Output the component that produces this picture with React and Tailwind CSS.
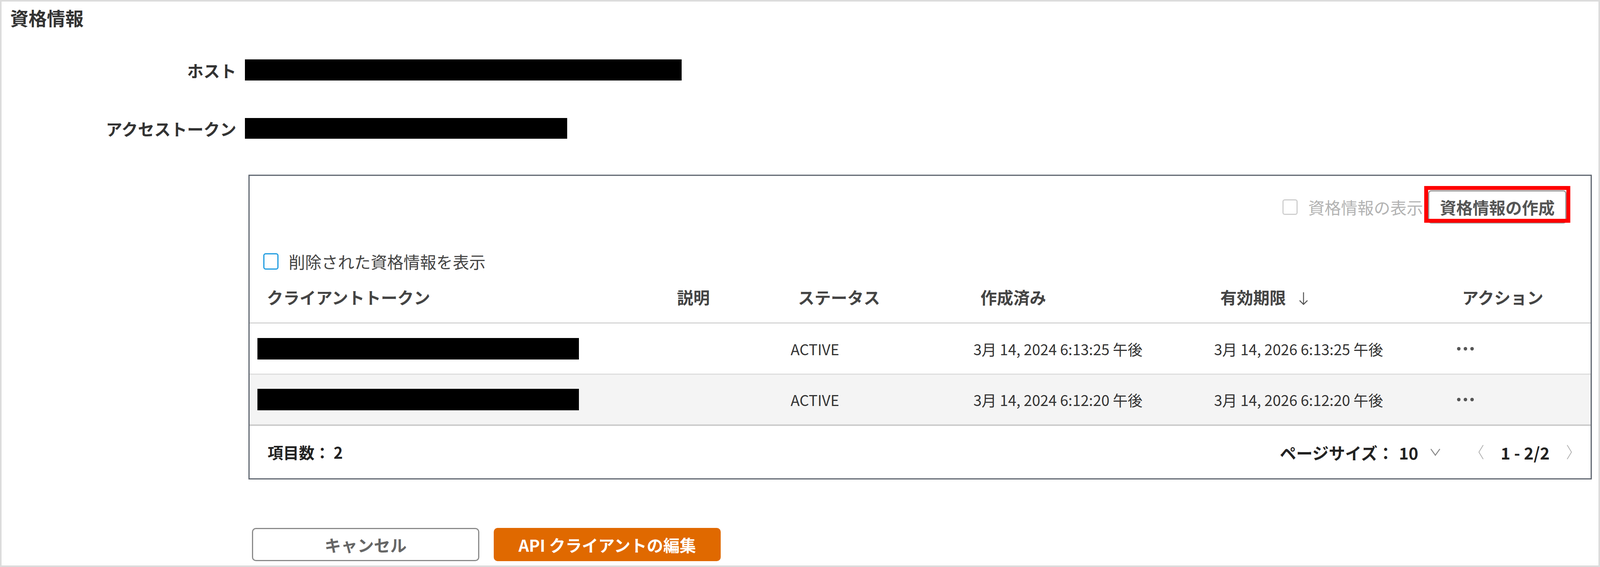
import React from 'react';

const rows = [
    { status: 'ACTIVE', created: '3月 14, 2024 6:13:25 午後', expires: '3月 14, 2026 6:13:25 午後' },
    { status: 'ACTIVE', created: '3月 14, 2024 6:12:20 午後', expires: '3月 14, 2026 6:12:20 午後' },
];

const cols = "grid grid-cols-[1050px_315px_468px_616px_622px_1fr] items-center";

const Dots = () => (
    <div className="flex items-center gap-[8px]">
        <span className="w-[9px] h-[9px] rounded-full bg-[#555]" />
        <span className="w-[9px] h-[9px] rounded-full bg-[#555]" />
        <span className="w-[9px] h-[9px] rounded-full bg-[#555]" />
    </div>
);

const App = () => {
    return (
        <div className="w-full h-[1451px] border-[4px] border-[#dcdcdc] bg-white font-['Noto_Sans_CJK_JP','Noto_Sans',sans-serif] text-[#333]">
            <h1 className="pl-[22px] pt-[11px] text-[47px] leading-[60px] font-bold text-[#333]">資格情報</h1>

            {/* credentials */}
            <div className="mt-[74px] flex items-center h-[60px] gap-[22px]">
                <div className="w-[601px] text-right text-[42px] font-bold">ホスト</div>
                <div className="w-[1118px] h-[54px] bg-black" />
            </div>
            <div className="mt-[89px] flex items-center h-[60px] gap-[22px]">
                <div className="w-[601px] text-right text-[42px] font-bold">アクセストークン</div>
                <div className="w-[825px] h-[53px] bg-black" />
            </div>

            {/* table panel */}
            <div className="mt-[89px] ml-[632px] w-[3439px] border-[3px] border-[#5f6670]">
                <div className="flex justify-end items-center pt-[37px] pr-[62px]">
                    <div className="flex items-center gap-[27px] mr-[13px]">
                        <span className="w-[39px] h-[40px] rounded-[6px] border-[3px] border-[#cfcfcf]" />
                        <span className="text-[42px] leading-[60px] text-[#b3b3b3]">資格情報の表示</span>
                    </div>
                    <div className="relative">
                        <button className="w-[354px] h-[85px] rounded-[8px] border-[3px] border-[#9a9a9a] bg-white text-[42px] font-bold text-[#555]">
                            資格情報の作成
                        </button>
                        <div className="absolute -left-[10px] -right-[10px] -top-[11px] bottom-[2px] border-[10px] border-[#ff0000]" />
                    </div>
                </div>

                <div className="mt-[73px] pl-[35px] h-[48px] flex items-center gap-[26px]">
                    <span className="w-[39px] h-[42px] rounded-[6px] border-[3px] border-[#1e9be0]" />
                    <span className="text-[42px] leading-[48px] text-[#444]">削除された資格情報を表示</span>
                </div>

                {/* header */}
                <div className={cols + " h-[135px] border-b-[3px] border-[#d6d6d6] text-[42px] font-bold text-[#444]"}>
                    <div className="pl-[44px]">クライアントトークン</div>
                    <div className="pl-[44px]">説明</div>
                    <div className="pl-[39px]">ステータス</div>
                    <div className="pl-[38px]">作成済み</div>
                    <div className="pl-[36px] flex items-center gap-[33px]">
                        <span>有効期限</span>
                        <svg width="24" height="34" viewBox="0 0 24 34" className="mt-[10px]">
                            <line x1="12" y1="1" x2="12" y2="32" stroke="#555" strokeWidth="2.5" />
                            <polyline points="2,22 12,32 22,22" fill="none" stroke="#555" strokeWidth="2.5" />
                        </svg>
                    </div>
                    <div className="pl-[33px]">アクション</div>
                </div>

                {rows.map((r, i) => (
                    <div
                        key={i}
                        className={cols + " text-[38px] text-[#333] " + (i === 1 ? "h-[131px] bg-[#f4f4f4] border-b-[4px] border-[#cdcdcd]" : "h-[131px] border-b-[3px] border-[#dedede]")}
                    >
                        <div className="pl-[20px]">
                            <div className="w-[823px] h-[55px] bg-black" />
                        </div>
                        <div />
                        <div className="pl-[20px]">{r.status}</div>
                        <div className="pl-[20px]">{r.created}</div>
                        <div className="pl-[20px]">{r.expires}</div>
                        <div className="pl-[20px]"><Dots /></div>
                    </div>
                ))}

                {/* footer */}
                <div className="h-[134px] flex items-center justify-between pl-[46px] pr-[47px]">
                    <div className="text-[40px] font-bold text-[#222]">項目数： 2</div>
                    <div className="flex items-center text-[42px] text-[#222]">
                        <span className="font-bold">ページサイズ：</span>
                        <span className="ml-[13px] font-bold">10</span>
                        <svg width="27" height="20" viewBox="0 0 27 20" className="ml-[30px]">
                            <polyline points="2,2 13.5,18 25,2" fill="none" stroke="#888" strokeWidth="2.5" />
                        </svg>
                        <svg width="15" height="40" viewBox="0 0 15 40" className="ml-[96px]">
                            <polyline points="13,2 2,20 13,38" fill="none" stroke="#b0b0b0" strokeWidth="2" />
                        </svg>
                        <span className="ml-[43px] font-bold">1 - 2/2</span>
                        <svg width="15" height="40" viewBox="0 0 15 40" className="ml-[43px]">
                            <polyline points="2,2 13,20 2,38" fill="none" stroke="#b0b0b0" strokeWidth="2" />
                        </svg>
                    </div>
                </div>
            </div>

            {/* buttons */}
            <div className="mt-[124px] ml-[641px] flex gap-[37px]">
                <button className="w-[582px] h-[85px] rounded-[10px] border-[3px] border-[#8a8a8a] bg-white text-[42px] font-bold text-[#666]">
                    キャンセル
                </button>
                <button className="w-[581px] h-[85px] rounded-[10px] bg-[#e06900] text-[42px] font-bold text-white">
                    API クライアントの編集
                </button>
            </div>
        </div>
    );
};

export default App;
